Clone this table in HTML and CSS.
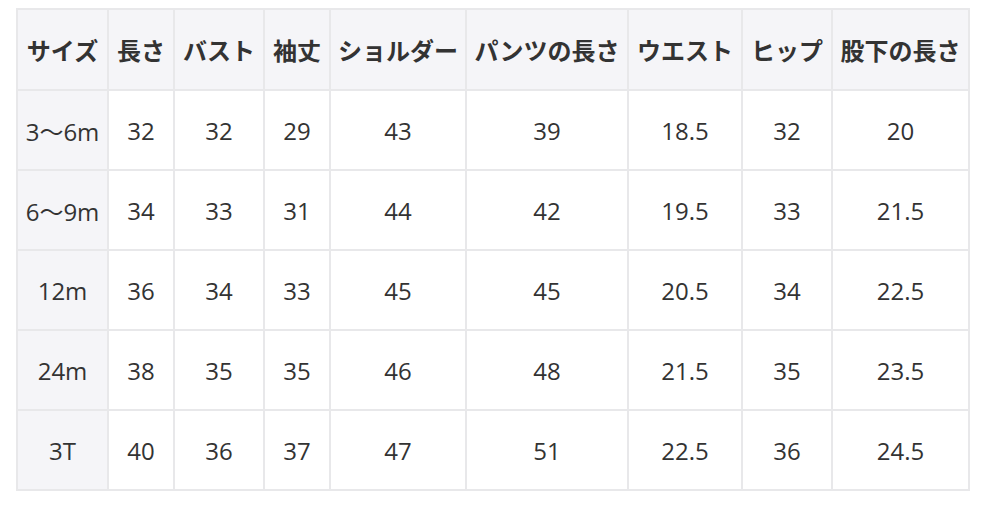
FILE: index.html
```html
<!DOCTYPE html>
<html lang="ja">
<head>
<meta charset="utf-8">
<link rel="stylesheet" href="styles.css">
</head>
<body>
<div class="wrap">
<table class="size-table">
<colgroup>
<col class="c1"><col class="c2"><col class="c3"><col class="c4"><col class="c5"><col class="c6"><col class="c7"><col class="c8"><col class="c9">
</colgroup>
<thead>
<tr><th>サイズ</th><th>長さ</th><th>バスト</th><th>袖丈</th><th>ショルダー</th><th>パンツの長さ</th><th>ウエスト</th><th>ヒップ</th><th>股下の長さ</th></tr>
</thead>
<tbody>
<tr><th>3〜6m</th><td>32</td><td>32</td><td>29</td><td>43</td><td>39</td><td>18.5</td><td>32</td><td>20</td></tr>
<tr><th>6〜9m</th><td>34</td><td>33</td><td>31</td><td>44</td><td>42</td><td>19.5</td><td>33</td><td>21.5</td></tr>
<tr><th>12m</th><td>36</td><td>34</td><td>33</td><td>45</td><td>45</td><td>20.5</td><td>34</td><td>22.5</td></tr>
<tr><th>24m</th><td>38</td><td>35</td><td>35</td><td>46</td><td>48</td><td>21.5</td><td>35</td><td>23.5</td></tr>
<tr><th>3T</th><td>40</td><td>36</td><td>37</td><td>47</td><td>51</td><td>22.5</td><td>36</td><td>24.5</td></tr>
</tbody>
</table>
</div>
</body>
</html>
```
FILE: styles.css
```css
html, body {
  margin: 0;
  padding: 0;
  background: #ffffff;
}
.wrap {
  padding: 8px 16px;
}
.size-table {
  border-collapse: separate;
  border-spacing: 0;
  table-layout: fixed;
  width: 954px;
  border-top: 2px solid #e8e8ea;
  border-left: 2px solid #e8e8ea;
  font-family: "Open Sans", "Noto Sans CJK JP", sans-serif;
  font-size: 24px;
  color: #333333;
}
.c1 { width: 91px; }
.c2 { width: 66px; }
.c3 { width: 90px; }
.c4 { width: 66px; }
.c5 { width: 136px; }
.c6 { width: 162px; }
.c7 { width: 114px; }
.c8 { width: 90px; }
.c9 { width: 137px; }
.size-table th,
.size-table td {
  border-right: 2px solid #e8e8ea;
  border-bottom: 2px solid #e8e8ea;
  text-align: center;
  vertical-align: middle;
  padding: 0;
  white-space: nowrap;
}
.size-table thead th {
  height: 79px;
  background: #f5f5f8;
  font-family: "Noto Sans CJK JP", sans-serif;
  font-weight: 700;
  font-size: 24px;
  color: #333333;
}
.size-table tbody tr {
  height: 80px;
}
.size-table tbody th {
  background: #f5f5f8;
  font-weight: 400;
}
.size-table tbody td {
  background: #ffffff;
}
```
